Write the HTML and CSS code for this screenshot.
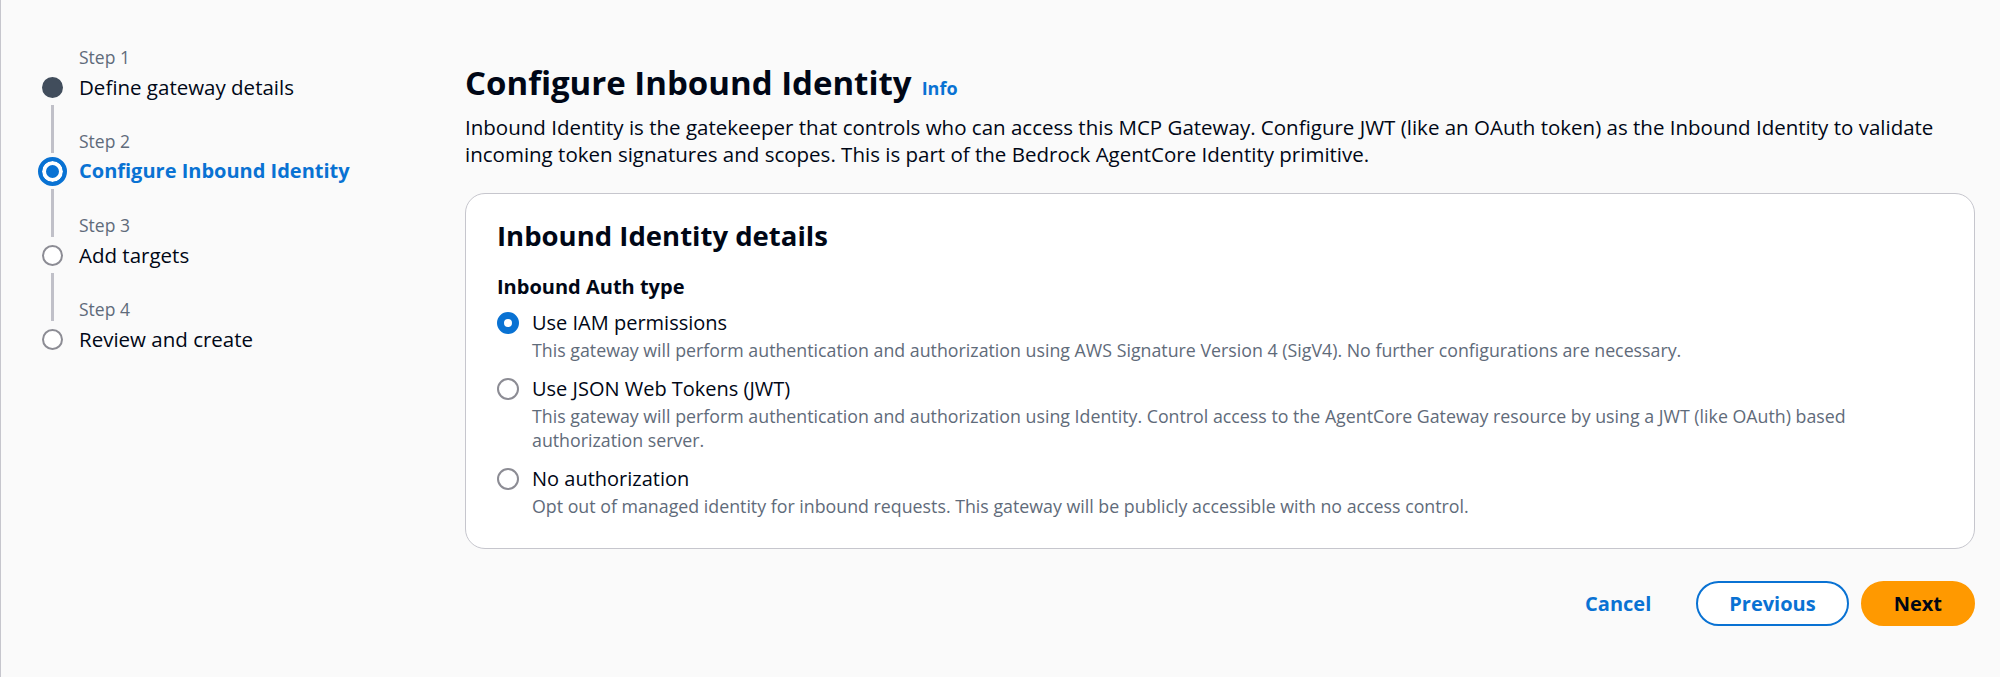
FILE: index.html
```html
<!DOCTYPE html>
<html lang="en">
<head>
<meta charset="utf-8">
<title>Configure Inbound Identity</title>
<link rel="stylesheet" href="styles.css">
</head>
<body>
<div class="page">
  <nav class="steps">
    <ol class="step-list">
      <li class="step">
        <div class="track"><span class="seg seg-top hidden"></span><span class="dot-cell"><span class="dot dot-done"></span></span><span class="seg seg-bottom"></span></div>
        <div class="step-text"><div class="step-num">Step 1</div><div class="step-title">Define gateway details</div></div>
      </li>
      <li class="step">
        <div class="track"><span class="seg seg-top"></span><span class="dot-cell"><span class="dot dot-active"></span></span><span class="seg seg-bottom"></span></div>
        <div class="step-text"><div class="step-num">Step 2</div><div class="step-title step-title-active">Configure Inbound Identity</div></div>
      </li>
      <li class="step">
        <div class="track"><span class="seg seg-top"></span><span class="dot-cell"><span class="dot"></span></span><span class="seg seg-bottom"></span></div>
        <div class="step-text"><div class="step-num">Step 3</div><div class="step-title">Add targets</div></div>
      </li>
      <li class="step">
        <div class="track"><span class="seg seg-top"></span><span class="dot-cell"><span class="dot"></span></span><span class="seg seg-bottom hidden"></span></div>
        <div class="step-text"><div class="step-num">Step 4</div><div class="step-title">Review and create</div></div>
      </li>
    </ol>
  </nav>

  <main class="main">
    <div class="page-head">
      <h1 class="page-title">Configure Inbound Identity</h1>
      <a class="info-link" href="#">Info</a>
    </div>
    <p class="page-desc">Inbound Identity is the gatekeeper that controls who can access this MCP Gateway. Configure JWT (like an OAuth token) as the Inbound Identity to validate incoming token signatures and scopes. This is part of the Bedrock AgentCore Identity primitive.</p>

    <section class="card">
      <h2 class="card-title">Inbound Identity details</h2>
      <div class="field-label">Inbound Auth type</div>
      <div class="radio-group">
        <label class="radio-item">
          <span class="radio radio-checked"></span>
          <span class="radio-text">
            <span class="radio-label">Use IAM permissions</span>
            <span class="radio-desc">This gateway will perform authentication and authorization using AWS Signature Version 4 (SigV4). No further configurations are necessary.</span>
          </span>
        </label>
        <label class="radio-item">
          <span class="radio"></span>
          <span class="radio-text">
            <span class="radio-label">Use JSON Web Tokens (JWT)</span>
            <span class="radio-desc">This gateway will perform authentication and authorization using Identity. Control access to the AgentCore Gateway resource by using a JWT (like OAuth) based authorization server.</span>
          </span>
        </label>
        <label class="radio-item">
          <span class="radio"></span>
          <span class="radio-text">
            <span class="radio-label">No authorization</span>
            <span class="radio-desc">Opt out of managed identity for inbound requests. This gateway will be publicly accessible with no access control.</span>
          </span>
        </label>
      </div>
    </section>

    <div class="actions">
      <button class="btn btn-link">Cancel</button>
      <button class="btn btn-normal">Previous</button>
      <button class="btn btn-primary">Next</button>
    </div>
  </main>
</div>
</body>
</html>
```

FILE: styles.css
```css
* { box-sizing: border-box; }

html, body {
  margin: 0;
  padding: 0;
  background: #fafafa;
}

body {
  font-family: "Open Sans", "Noto Sans", sans-serif;
  color: #000716;
  font-size: 20px;
  line-height: 27px;
}

.page {
  display: flex;
  min-height: 677px;
  border-left: 1px solid #c6c6cd;
}

/* ---------- steps sidebar ---------- */
.steps {
  width: 464px;
  flex: none;
  padding: 45px 0 0 29px;
}

.step-list {
  list-style: none;
  margin: 0;
  padding: 0;
}

.step {
  display: grid;
  grid-template-columns: 44px 1fr;
  column-gap: 5px;
}

.track {
  display: flex;
  flex-direction: column;
  align-items: center;
}

.seg {
  width: 3px;
  background: #c0c0c8;
}

.seg-top {
  height: 24px;
  margin-bottom: 4px;
}

.seg-bottom {
  flex: 1;
  margin-top: 4px;
}

.seg.hidden { background: transparent; }

.dot-cell {
  height: 28px;
  display: flex;
  align-items: center;
  justify-content: center;
}

.dot {
  width: 21px;
  height: 21px;
  border-radius: 50%;
  border: 2px solid #8c8c94;
  background: #ffffff;
  flex: none;
}

.dot-done {
  border-color: #414d5c;
  background: #414d5c;
}

.dot-active {
  width: 29px;
  height: 29px;
  border: 4px solid #0972d3;
  background: #0972d3;
  box-shadow: inset 0 0 0 4px #ffffff;
}

.step-text {
  padding-bottom: 28px;
}

.step-num {
  font-size: 17.5px;
  line-height: 24px;
  color: #5f6b7a;
  margin-bottom: 4px;
}

.step-title {
  font-size: 20.5px;
  line-height: 28px;
  color: #000716;
}

.step-title-active {
  color: #0972d3;
  font-weight: 700;
  font-size: 20px;
}

/* ---------- main ---------- */
.main {
  flex: 1;
  padding: 63px 25px 0 0;
}

.page-head {
  display: flex;
  align-items: baseline;
  gap: 10px;
}

.page-title {
  margin: 0;
  font-size: 33px;
  line-height: 40px;
  font-weight: 700;
  color: #000716;
}

.info-link {
  font-size: 18px;
  font-weight: 700;
  color: #0972d3;
  text-decoration: none;
}

.page-desc {
  margin: 11px 0 0;
  font-size: 20.5px;
  line-height: 27px;
  color: #000716;
}

.card {
  margin-top: 25px;
  background: #ffffff;
  border: 1px solid #c6c6cd;
  border-radius: 20px;
  padding: 24px 32px 30px 31px;
}

.card-title {
  margin: 0;
  font-size: 27.5px;
  line-height: 36px;
  font-weight: 700;
}

.field-label {
  margin-top: 20px;
  font-size: 20px;
  line-height: 26px;
  font-weight: 700;
}

.radio-group {
  margin-top: 10px;
  display: flex;
  flex-direction: column;
  gap: 14px;
}

.radio-item {
  display: grid;
  grid-template-columns: 22px 1fr;
  column-gap: 13px;
  align-items: start;
}

.radio {
  width: 22px;
  height: 22px;
  margin-top: 2px;
  border-radius: 50%;
  border: 2px solid #8c8c94;
  background: #ffffff;
}

.radio-checked {
  border: 7px solid #0972d3;
}

.radio-text {
  display: flex;
  flex-direction: column;
  gap: 2px;
}

.radio-label {
  font-size: 20px;
  line-height: 26px;
  color: #000716;
}

.radio-desc {
  font-size: 17.8px;
  line-height: 24px;
  color: #5f6b7a;
}

/* ---------- actions ---------- */
.actions {
  margin-top: 32px;
  display: flex;
  justify-content: flex-end;
  gap: 12px;
}

.btn {
  font-family: "Open Sans", "Noto Sans", sans-serif;
  font-size: 20px;
  font-weight: 700;
  line-height: 41px;
  height: 45px;
  padding: 0 31px;
  border-radius: 23px;
  border: 2px solid transparent;
  background: transparent;
  cursor: pointer;
}

.btn-link {
  color: #0972d3;
}

.btn-normal {
  color: #0972d3;
  border-color: #0972d3;
  background: #ffffff;
}

.btn-primary {
  color: #000716;
  background: #ff9900;
  border-color: #ff9900;
}
```
